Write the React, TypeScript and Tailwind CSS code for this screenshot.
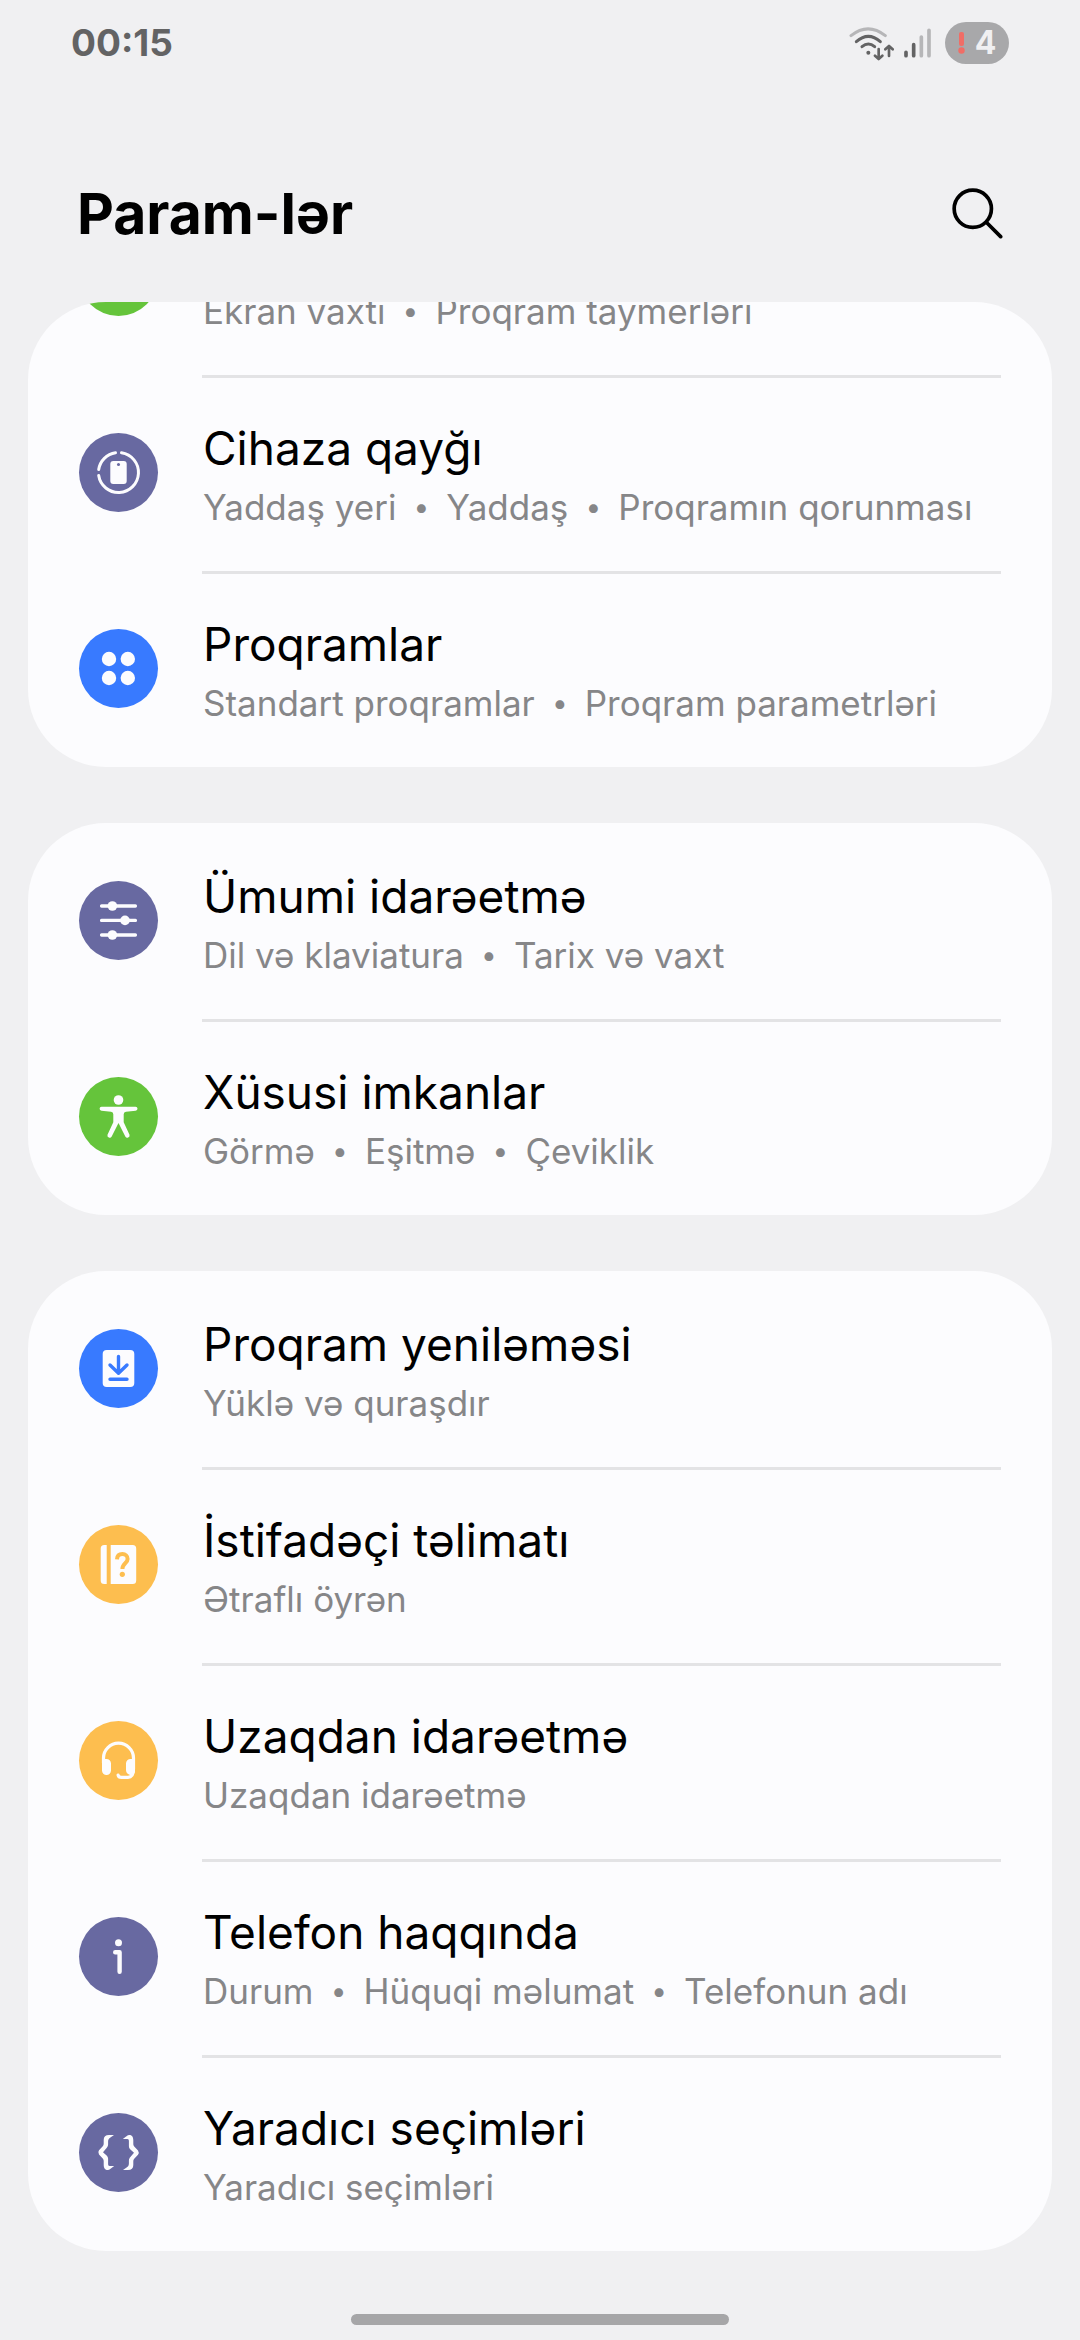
import type { ReactNode } from "react"

type Item = {
  title: string
  details: string[]
  color: string
  icon: ReactNode
}

const purple = "bg-[#6869a1]"
const blue = "bg-[#387aff]"
const green = "bg-[#65c43b]"
const amber = "bg-[#fdbe4f]"

const brace =
  "M35 22H30c-3.5 0-5.3 1.8-5.3 5v3.5c0 1.5-.4 2.3-1.4 3.3l-3.3 3.4q-1.5 2 0 4.2l3.3 3.6c1 1 1.4 1.8 1.4 3.3v3.2c0 4 1.5 5.5 4 5.5 1 0 1.8-.4 2.5-1l4-3h-4.5c-1.2 0-1.6-.8-1.6-2v-5c0-1.5-.5-2.5-1.5-3.6L24 39.3l3.6-4.4c1-1.2 1.5-2 1.5-3.6v-2.7c0-2 .8-3 2.3-4z"

const groups: Item[][] = [
  [
    // scrolled under the header, only its lower edge is visible
    { title: "", details: ["Ekran vaxtı", "Proqram taymerləri"], color: green, icon: null },
    {
      title: "Cihaza qayğı",
      details: ["Yaddaş yeri", "Yaddaş", "Proqramın qorunması"],
      color: purple,
      icon: (
        <>
          <path
            d="M36.5 19.7A20 20 0 0 0 19.7 36.5M42.5 19.7A20 20 0 1 1 19.7 42.5"
            fill="none"
            stroke="currentColor"
            strokeWidth="3"
            strokeLinecap="round"
          />
          <rect x="31.3" y="28" width="16.4" height="23" rx="3" />
          <circle cx="39.5" cy="31.5" r="1.5" fill="#6869a1" />
        </>
      ),
    },
    {
      title: "Proqramlar",
      details: ["Standart proqramlar", "Proqram parametrləri"],
      color: blue,
      icon: (
        <>
          <circle cx="30" cy="30" r="7.2" />
          <circle cx="48.8" cy="30" r="7.2" />
          <circle cx="30" cy="49" r="7.2" />
          <circle cx="48.8" cy="49" r="7.2" />
        </>
      ),
    },
  ],
  [
    {
      title: "Ümumi idarəetmə",
      details: ["Dil və klaviatura", "Tarix və vaxt"],
      color: purple,
      icon: (
        <>
          <path
            d="M22.6 25H56.4M22.6 39.4H56.4M22.6 54H56.4"
            stroke="currentColor"
            strokeWidth="3.4"
            strokeLinecap="round"
          />
          <circle cx="33.4" cy="25" r="4.8" />
          <circle cx="46" cy="39.4" r="4.8" />
          <circle cx="33.4" cy="54" r="4.8" />
        </>
      ),
    },
    {
      title: "Xüsusi imkanlar",
      details: ["Görmə", "Eşitmə", "Çeviklik"],
      color: green,
      icon: (
        <>
          <circle cx="39.5" cy="23" r="4.8" />
          <path d="M22.7 29.7H56.4a2 2 0 0 1 .2 4L47 34.7q-2.3.2-2.3 2.5v8l5.8 12.6a2.3 2.3 0 0 1-4.2 1.8L39.5 46l-6.8 13.6a2.3 2.3 0 0 1-4.2-1.8l5.8-12.6v-8q0-2.3-2.3-2.5l-9.5-1a2 2 0 0 1 .2-4z" />
        </>
      ),
    },
  ],
  [
    {
      title: "Proqram yeniləməsi",
      details: ["Yüklə və quraşdır"],
      color: blue,
      icon: (
        <>
          <rect x="23.7" y="21" width="31.6" height="37" rx="4" />
          <path
            d="M39.5 27.5V44M31 36l8.5 8.3L48 36M31 50.2H48"
            fill="none"
            stroke="#387aff"
            strokeWidth="3.4"
            strokeLinecap="round"
            strokeLinejoin="round"
          />
        </>
      ),
    },
    {
      title: "İstifadəçi təlimatı",
      details: ["Ətraflı öyrən"],
      color: amber,
      icon: (
        <>
          <path d="M27.7 20v39h-2.5a3.5 3.5 0 0 1-3.5-3.5v-32a3.5 3.5 0 0 1 3.5-3.5zM31.7 20h22a3.5 3.5 0 0 1 3.5 3.5v32a3.5 3.5 0 0 1-3.5 3.5h-22z" />
          <path
            d="M38 34.3c.2-3.4 2.4-5.2 5.4-5.2 3.1 0 5.2 1.8 5.2 4.8 0 4.5-5.2 4.3-5.2 10"
            fill="none"
            stroke="#fdbe4f"
            strokeWidth="4"
          />
          <circle cx="43.3" cy="49.3" r="2.6" fill="#fdbe4f" />
        </>
      ),
    },
    {
      title: "Uzaqdan idarəetmə",
      details: ["Uzaqdan idarəetmə"],
      color: amber,
      icon: (
        <>
          <path
            d="M24.5 42v-5a15 14.8 0 0 1 30 0v11q0 8.3-5.5 8.3h-6.5q-3 0-3.4-2.2"
            fill="none"
            stroke="currentColor"
            strokeWidth="3.2"
            strokeLinecap="round"
          />
          <path d="M23 38h4.5a4.5 4.5 0 0 1 4.5 4.5v7a4.5 4.5 0 0 1-9 0zM56 38h-4.5a4.5 4.5 0 0 0-4.5 4.5v6.5c0 2 1 3.5 3 4.5l3 1.5 3-4z" />
        </>
      ),
    },
    {
      title: "Telefon haqqında",
      details: ["Durum", "Hüquqi məlumat", "Telefonun adı"],
      color: purple,
      icon: (
        <>
          <circle cx="39.5" cy="25.7" r="3.5" />
          <path
            d="M36.2 35.3h4.4v19.5"
            fill="none"
            stroke="currentColor"
            strokeWidth="4.4"
            strokeLinecap="round"
            strokeLinejoin="round"
          />
        </>
      ),
    },
    {
      title: "Yaradıcı seçimləri",
      details: ["Yaradıcı seçimləri"],
      color: purple,
      icon: (
        <>
          <path d={brace} />
          <path d={brace} transform="rotate(180 39.5 39.5)" />
        </>
      ),
    },
  ],
]

function StatusBar() {
  return (
    <div className="flex h-[86px] items-center justify-between px-[71px]">
      <span className="text-[37px] leading-[46px] font-bold text-[#636364]">00:15</span>
      <div className="flex items-center">
        <svg className="mr-[10px] h-[35px] w-[45px]" viewBox="148 78 135 105" fill="none" strokeLinecap="round" strokeLinejoin="round">
          <path d="M154 107Q205 66 257 107" stroke="#b6b6b8" strokeWidth="9" />
          <path d="M170 125q36-32 72 0M187 140q19-16 38 0" stroke="#636364" strokeWidth="9" />
          <circle cx="206" cy="158" r="6" fill="#636364" />
          <path
            d="M237 147v28M226 167l11 10 11-10M268 168v-28M257 148l11-10 11 10"
            stroke="#636364"
            strokeWidth="8"
          />
        </svg>
        <svg className="mr-[14px] h-[30px] w-[27px]" viewBox="312 86 81 90" strokeLinecap="round" strokeWidth="11">
          <path d="M318 159v10M341 136v33" stroke="#636364" />
          <path d="M364 113v56M387 93v76" stroke="#b6b6b8" />
        </svg>
        <div className="flex h-[42px] w-16 items-center justify-center gap-[10px] rounded-full bg-[#a8a8aa]">
          <svg className="h-[22px] w-[7px]" viewBox="0 0 7 22" fill="#f06d66">
            <rect x="1" width="5" height="14" rx="2" />
            <circle cx="3.5" cy="18.5" r="3.2" />
          </svg>
          <span className="text-[32px] leading-[42px] font-bold text-[#f0f0f2]">4</span>
        </div>
      </div>
    </div>
  )
}

function Row({ item, divided }: { item: Item; divided: boolean }) {
  return (
    <button type="button" className="flex h-[196px] w-full items-center px-[51px] pb-px text-left">
      <span className={`mr-11 flex size-[79px] shrink-0 rounded-full text-[#fcfcfe] ${item.color}`}>
        <svg className="size-[79px]" viewBox="0 0 79 79" fill="currentColor" aria-hidden="true">
          {item.icon}
        </svg>
      </span>
      <span
        className={`flex h-full min-w-0 flex-1 flex-col justify-center pt-1 pl-px ${
          divided ? "shadow-[inset_0_3px_0_#e3e3e5]" : ""
        }`}
      >
        <span className="block h-16 text-[46px] leading-[64px] text-black">{item.title}</span>
        <span className="flex h-[54px] text-[35px] leading-[54px] whitespace-nowrap text-[#868688]">
          {item.details.map((detail, i) => (
            <span key={detail} className="flex">
              {i > 0 && <span className="w-[50px] text-center text-[28px]">•</span>}
              {detail}
            </span>
          ))}
        </span>
      </span>
    </button>
  )
}

export default function App() {
  return (
    <div className="min-h-screen bg-[#f0f0f2] font-['Inter',sans-serif]">
      <StatusBar />
      <header className="flex items-center justify-between px-[77px] pt-[89px] pb-[50px]">
        <h1 className="text-[57px] leading-[77px] font-bold text-black">Param-lər</h1>
        <button type="button" aria-label="Axtar">
          <svg className="size-[51px]" viewBox="458 560 152 152" fill="none" stroke="#000" strokeWidth="11" strokeLinecap="round">
            <circle cx="520" cy="622" r="55.5" />
            <path d="M561 663l42 42" />
          </svg>
        </button>
      </header>
      <main className="flex flex-col gap-14 px-7">
        {groups.map((group, g) => (
          <ul key={g} className="overflow-hidden rounded-[78px] bg-[#fcfcfe]">
            {group.map((item, i) => (
              <li key={i} className={item.title ? "" : "-mt-[123px]"}>
                <Row item={item} divided={i > 0} />
              </li>
            ))}
          </ul>
        ))}
      </main>
      <div className="mx-auto mt-[63px] h-[11px] w-[35%] rounded-full bg-[#a6a6a8]" />
    </div>
  )
}
